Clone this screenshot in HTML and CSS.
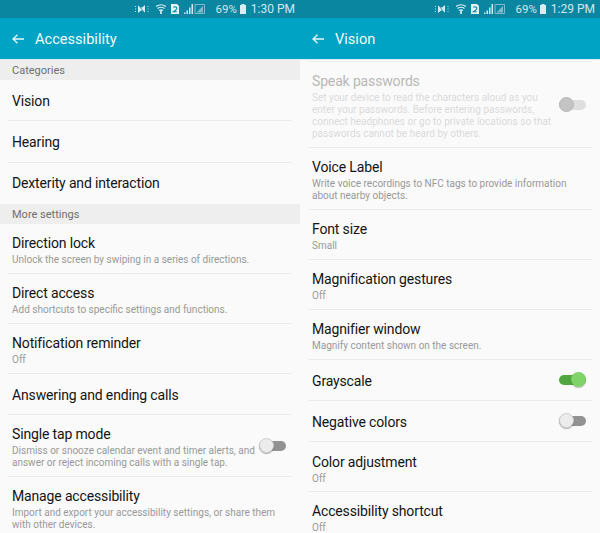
FILE: index.html
```html
<!DOCTYPE html>
<html lang="en">
<head>
    <meta charset="UTF-8">
    <title>Accessibility</title>
    <link rel="stylesheet" href="styles.css">
</head>
<body>

<svg class="icon-defs" width="0" height="0">
    <symbol id="mute" viewBox="0 0 14 10">
        <path d="M3 1l3 2.500h1L10 1v8L7 6.500H6L3 9z" fill="#d6eef3"/>
        <path d="M3 .5l7 9" stroke="#0b86a0" stroke-width=".8"/>
        <path d="M.5 2v1M.5 4.500v1M.5 7v1M13 2v1M13 4.500v1M13 7v1" stroke="#b5dde6" stroke-width="1"/>
    </symbol>
    <symbol id="wifi" viewBox="0 0 10 10">
        <path d="M0 2.500Q5-1 10 2.500M1.500 4.500Q5 2 8.500 4.500M3 6.500Q5 5 7 6.500" stroke="#d6eef3" stroke-width="1.200" fill="none"/>
        <path d="M5 6v4" stroke="#e2f2f5" stroke-width="1.600"/>
    </symbol>
    <symbol id="sim" viewBox="0 0 8 10">
        <path d="M0 0h6l2 2v8H0z" fill="#e2f2f5"/>
        <path d="M2.500 3.500Q4 2 5.500 3.500T2.500 7.700H5.700" stroke="#0b86a0" stroke-width="1.100" fill="none"/>
    </symbol>
    <symbol id="signal" viewBox="0 0 21 10">
        <path d="M0 10h1.500V8.500H0zM2.500 10H4V6.500H2.500zM5 10h1.500V3.500H5zM7.500 10H9V0H7.500z" fill="#cfe9ef"/>
        <path d="M11 .5h9.500v9H11z" fill="none" stroke="#7fbccb"/>
        <path d="M12.500 8.500l6.500-6.500v6.500z" fill="#7fbccb"/>
    </symbol>
    <symbol id="battery" viewBox="0 0 6 10">
        <path d="M1.500 0h3v1H6v9H0V1h1.500z" fill="#d6eef3"/>
    </symbol>
    <symbol id="back" viewBox="0 0 12 10">
        <path d="M12 5H1M5.500 .7L1 5l4.500 4.300" stroke="#e6f6f9" stroke-width="1.300" fill="none"/>
    </symbol>
</svg>

<div class="screens">
    <section class="screen">
        <div class="status-bar">
            <svg class="ic-mute"><use href="#mute"/></svg>
            <svg class="ic-wifi"><use href="#wifi"/></svg>
            <svg class="ic-sim"><use href="#sim"/></svg>
            <svg class="ic-signal"><use href="#signal"/></svg>
            <span class="battery-pct">69%</span>
            <svg class="ic-battery"><use href="#battery"/></svg>
            <span class="clock">1:30 PM</span>
        </div>
        <header class="app-bar">
            <svg class="ic-back"><use href="#back"/></svg>
            <h1>Accessibility</h1>
        </header>
        <div class="app-bar-edge"></div>
        <div class="section-label">Categories</div>
        <div class="row row-plain"><div class="row-title">Vision</div></div>
        <div class="row row-plain"><div class="row-title">Hearing</div></div>
        <div class="row row-plain row-last"><div class="row-title">Dexterity and interaction</div></div>
        <div class="section-label">More settings</div>
        <div class="row row-two">
            <div class="row-title">Direction lock</div>
            <div class="row-desc">Unlock the screen by swiping in a series of directions.</div>
        </div>
        <div class="row row-two">
            <div class="row-title">Direct access</div>
            <div class="row-desc">Add shortcuts to specific settings and functions.</div>
        </div>
        <div class="row row-two">
            <div class="row-title">Notification reminder</div>
            <div class="row-desc">Off</div>
        </div>
        <div class="row row-plain"><div class="row-title">Answering and ending calls</div></div>
        <div class="row row-three row-switch">
            <div class="row-text">
                <div class="row-title">Single tap mode</div>
                <div class="row-desc">Dismiss or snooze calendar event and timer alerts, and answer or reject incoming calls with a single tap.</div>
            </div>
            <div class="switch switch-off"><span class="knob"></span></div>
        </div>
        <div class="row row-three row-last">
            <div class="row-title">Manage accessibility</div>
            <div class="row-desc">Import and export your accessibility settings, or share them with other devices.</div>
        </div>
    </section>

    <section class="screen">
        <div class="status-bar">
            <svg class="ic-mute"><use href="#mute"/></svg>
            <svg class="ic-wifi"><use href="#wifi"/></svg>
            <svg class="ic-sim"><use href="#sim"/></svg>
            <svg class="ic-signal"><use href="#signal"/></svg>
            <span class="battery-pct">69%</span>
            <svg class="ic-battery"><use href="#battery"/></svg>
            <span class="clock">1:29 PM</span>
        </div>
        <header class="app-bar">
            <svg class="ic-back"><use href="#back"/></svg>
            <h1>Vision</h1>
        </header>
        <div class="app-bar-edge"></div>
        <div class="row row-stub"></div>
        <div class="row row-five row-switch row-disabled">
            <div class="row-text">
                <div class="row-title">Speak passwords</div>
                <div class="row-desc">Set your device to read the characters aloud as you enter your passwords. Before entering passwords, connect headphones or go to private locations so that passwords cannot be heard by others.</div>
            </div>
            <div class="switch switch-disabled"><span class="knob"></span></div>
        </div>
        <div class="row row-three row-voice">
            <div class="row-title">Voice Label</div>
            <div class="row-desc">Write voice recordings to NFC tags to provide information about nearby objects.</div>
        </div>
        <div class="row row-two">
            <div class="row-title">Font size</div>
            <div class="row-desc">Small</div>
        </div>
        <div class="row row-two">
            <div class="row-title">Magnification gestures</div>
            <div class="row-desc">Off</div>
        </div>
        <div class="row row-two">
            <div class="row-title">Magnifier window</div>
            <div class="row-desc">Magnify content shown on the screen.</div>
        </div>
        <div class="row row-plain row-switch">
            <div class="row-title">Grayscale</div>
            <div class="switch switch-on"><span class="knob"></span></div>
        </div>
        <div class="row row-plain row-switch">
            <div class="row-title">Negative colors</div>
            <div class="switch switch-off"><span class="knob"></span></div>
        </div>
        <div class="row row-two">
            <div class="row-title">Color adjustment</div>
            <div class="row-desc">Off</div>
        </div>
        <div class="row row-two row-last">
            <div class="row-title">Accessibility shortcut</div>
            <div class="row-desc">Off</div>
        </div>
    </section>
</div>

</body>
</html>
```

FILE: styles.css
```css
* {
    margin: 0;
    padding: 0;
    box-sizing: border-box;
}

body {
    font-family: Roboto, sans-serif;
    background-color: #fafafa;
    height: 533px;
    overflow: hidden;
}

.icon-defs {
    display: block;
    height: 0;
}

.screens {
    display: grid;
    grid-template-columns: 300px 300px;
    height: 533px;
    overflow: hidden;
}

.screen {
    height: 533px;
    overflow: hidden;
    background-color: #fafafa;
}

/* status bar, icons placed right to left from the clock */
.status-bar {
    height: 18px;
    background-color: #0b86a0;
    display: flex;
    align-items: center;
    justify-content: flex-end;
    padding-right: 5px;
    color: #cfe8ee;
    font-size: 12px;
}

.ic-mute { width: 14px; height: 10px; margin-right: 7px; }
.ic-wifi { width: 10px; height: 10px; margin-right: 5px; }
.ic-sim { width: 8px; height: 10px; margin-right: 5px; }
.ic-signal { width: 21px; height: 10px; margin-right: 10px; }
.ic-battery { width: 6px; height: 10px; margin: 0 5px 0 3px; }

.battery-pct {
    font-size: 11.500px;
}

.app-bar {
    height: 41px;
    background-color: #00a3c4;
    display: flex;
    align-items: center;
    padding: 1px 0 0 12px;
}

.ic-back {
    width: 12px;
    height: 10px;
    margin-right: 11px;
}

.app-bar h1 {
    font-size: 14.600px;
    font-weight: 400;
    color: #f0fafc;
}

.app-bar-edge {
    height: 1px;
    background-color: #d5ebf1;
}

.section-label {
    height: 20px;
    line-height: 21px;
    padding-left: 12px;
    font-size: 11px;
    color: #6f6f6f;
    background-color: #eeeeee;
}

.row {
    margin: 0 8px;
    padding: 0 4px;
    border-bottom: 1px solid #ebebeb;
    display: flex;
    flex-direction: column;
    justify-content: center;
}

.row-plain { height: 41.250px; padding-top: 2px; }
.row-two { height: 50px; padding-top: 4px; }
.row-three { height: 62px; padding-top: 3px; }
.row-voice { height: 61.500px; }
.row-five { height: 86px; padding-top: 3px; }
.row-stub { height: 2px; }

.row-last {
    border-bottom: none;
}

.row-plain.row-last { padding-top: 0; }
.row-two.row-last { padding-top: 2px; }
.row-three.row-last { padding-top: 2px; }

.row-switch {
    flex-direction: row;
    align-items: center;
    justify-content: space-between;
}

.row-switch .switch {
    margin-top: -3px;
}

.row-plain.row-switch .switch {
    margin-top: -2px;
}

.row-text {
    flex: 1;
    margin-right: 3px;
}

.row-title {
    font-size: 14px;
    letter-spacing: -0.15px;
    line-height: 18px;
    color: #141414;
}

.row-desc {
    font-size: 10px;
    line-height: 12px;
    margin-top: 2px;
    color: #999999;
}

.row-disabled .row-title {
    color: #b8b8b8;
}

.row-disabled .row-desc {
    color: #dadada;
}

.switch {
    width: 27px;
    height: 10px;
    border-radius: 5px;
    display: flex;
    align-items: center;
    flex-shrink: 0;
    margin-right: 2px;
}

.knob {
    width: 15px;
    height: 15px;
    border-radius: 50%;
    display: block;
}

.switch-off {
    background-color: #929292;
}

.switch-off .knob {
    background-color: #ececec;
    border: 1px solid #d0d0d0;
    box-shadow: 0 1px 1px rgba(0, 0, 0, 0.3);
}

.switch-on {
    background-color: #52a53f;
    justify-content: flex-end;
}

.switch-on .knob {
    background-color: #7fd368;
    box-shadow: 0 1px 1px rgba(0, 0, 0, 0.25);
}

.switch-disabled {
    background-color: #dfdfdf;
}

.switch-disabled .knob {
    background-color: #c4c4c4;
    border: 1px solid #b8b8b8;
}
```
